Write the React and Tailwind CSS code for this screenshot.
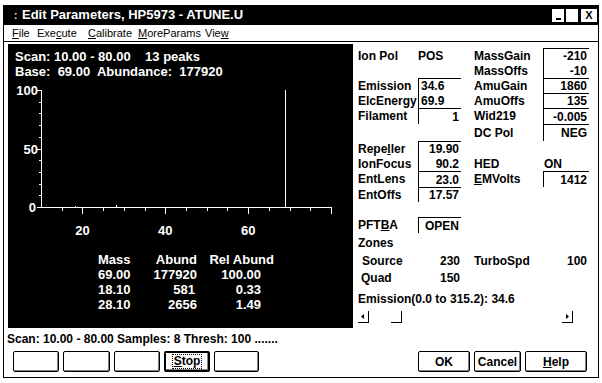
import React from 'react';

const U = ({ children }) => <span className="underline underline-offset-[1px]">{children}</span>;

// box edit field, sunken look = dark top + left edge
const Box = ({ children, top = true, left = false }) => (
  <div
    className={`w-full h-full flex items-center border-l border-black ${top ? 'border-t' : ''} ${
      left ? 'justify-start pl-[2px]' : 'justify-end pr-[2px]'
    }`}
  >
    {children}
  </div>
);

const rows = [
  { h: 'h-[15px]', l1: 'Ion Pol', v1: <span>POS</span>, l2: 'MassGain', v2: <Box>-210</Box> },
  { h: 'h-[15px]', l1: '', v1: null, l2: 'MassOffs', v2: <Box top={false}>-10</Box> },
  { h: 'h-[15px]', l1: 'Emission', v1: <Box left>34.6</Box>, l2: 'AmuGain', v2: <Box>1860</Box> },
  { h: 'h-[15px]', l1: 'ElcEnergy', v1: <Box left top={false}>69.9</Box>, l2: 'AmuOffs', v2: <Box>135</Box> },
  { h: 'h-[16px]', l1: 'Filament', v1: <Box>1</Box>, l2: 'Wid219', v2: <Box>-0.005</Box> },
  { h: 'h-[17px]', l1: '', v1: null, l2: 'DC Pol', v2: <Box>NEG</Box> },
  { h: 'h-[15px]', l1: <>Repe<U>l</U>ler</>, v1: <Box>19.90</Box>, l2: '', v2: null },
  { h: 'h-[15px]', l1: 'IonFocus', v1: <Box top={false}>90.2</Box>, l2: 'HED', v2: <span className="pl-[1px]">ON</span> },
  { h: 'h-[16px]', l1: 'EntLens', v1: <Box>23.0</Box>, l2: <><U>E</U>MVolts</>, v2: <Box>1412</Box> },
  { h: 'h-[15px]', l1: 'EntOffs', v1: <Box>17.57</Box>, l2: '', v2: null },
];

const grid = 'grid grid-cols-[60px_43px_13px_69px_46px] items-center';

function Chart() {
  const x0 = 33;
  const x1 = 323;
  const y0 = 128;
  const yTop = 11;
  const mx = (m) => x0 + ((m - 10) * (x1 - x0)) / 70;
  const py = (p) => y0 - ((y0 - yTop) * p) / 100;
  const xt = [15, 20, 25, 30, 35, 40, 45, 50, 55, 60, 65, 70, 75, 80];
  const yt = [10, 20, 30, 40, 60, 70, 80, 90];
  const txt = { fill: 'white', fontFamily: 'Liberation Sans, Arial, sans-serif', fontWeight: 700, fontSize: 13 };

  return (
    <svg width="345" height="160" className="block" shapeRendering="crispEdges">
      <line x1={x0 + 0.5} y1={yTop} x2={x0 + 0.5} y2={y0 + 1} stroke="white" />
      <line x1={x0} y1={y0 + 0.5} x2={x1 + 1} y2={y0 + 0.5} stroke="white" />
      {xt.map((m) => {
        const major = m % 20 === 0;
        const x = Math.round(mx(m)) + 0.5;
        return <line key={m} x1={x} y1={y0} x2={x} y2={y0 + (major ? 7 : 4)} stroke="white" />;
      })}
      {[0, 50, 100].map((p) => (
        <line key={p} x1={x0 - 4} y1={Math.round(py(p)) + 0.5} x2={x0} y2={Math.round(py(p)) + 0.5} stroke="white" />
      ))}
      {yt.map((p) => (
        <line key={p} x1={x0 - 2} y1={Math.round(py(p)) + 0.5} x2={x0} y2={Math.round(py(p)) + 0.5} stroke="white" />
      ))}
      {/* peaks */}
      <line x1={Math.round(mx(69)) + 0.5} y1={py(100)} x2={Math.round(mx(69)) + 0.5} y2={y0} stroke="white" />
      <line x1={Math.round(mx(28.1)) + 0.5} y1={y0 - 2} x2={Math.round(mx(28.1)) + 0.5} y2={y0} stroke="white" />
      <line x1={Math.round(mx(18.1)) + 0.5} y1={y0 - 1} x2={Math.round(mx(18.1)) + 0.5} y2={y0} stroke="white" />
      <text x="30" y="16" textAnchor="end" {...txt}>100</text>
      <text x="30" y="75" textAnchor="end" {...txt}>50</text>
      <text x="28" y="133" textAnchor="end" {...txt}>0</text>
      <text x={mx(20)} y="156" textAnchor="middle" {...txt}>20</text>
      <text x={mx(40)} y="156" textAnchor="middle" {...txt}>40</text>
      <text x={mx(60)} y="156" textAnchor="middle" {...txt}>60</text>
    </svg>
  );
}

const Btn = ({ w, children, disabled, isDefault }) => (
  <div
    className={`${w} h-[21px] flex items-center justify-center rounded-[2px] border-black text-[12px] font-bold ${
      isDefault ? 'border-2' : 'border'
    } ${disabled ? 'text-[#c8c8c8]' : 'text-black'} shadow-[inset_-1px_-1px_0_#808080]`}
  >
    {children}
  </div>
);

const ScrollBtn = ({ dir }) => (
  <div className="w-[11px] h-[12px] border-r border-b border-black flex items-center justify-center">
    {dir && (
      <svg width="4" height="5" viewBox="0 0 4 5">
        {dir === 'l' ? <path d="M3 0L0 2.5L3 5Z" fill="black" /> : <path d="M1 0L4 2.5L1 5Z" fill="black" />}
      </svg>
    )}
  </div>
);

export default function App() {
  return (
    <div className="w-[602px] h-[383px] bg-white overflow-hidden font-['Liberation_Sans',Arial,sans-serif] text-black">
      <div className="ml-[3px] mt-[5px] w-[596px] h-[373px] border-l border-r border-b border-black flex flex-col">
        {/* title bar */}
        <div className="h-[20px] bg-black flex items-center text-white pl-[10px] pr-[1px]">
          <span className="text-[10px] font-bold w-[8px]">:</span>
          <span className="text-[13px] font-bold">Edit Parameters, HP5973 - ATUNE.U</span>
          <div className="ml-auto flex items-center gap-[2px]">
            <div className="w-[12px] h-[13px] bg-white flex items-end justify-center pb-[2px]">
              <div className="w-[5px] h-[2px] bg-black" />
            </div>
            <div className="w-[12px] h-[13px] bg-white" />
            <div className="ml-[1px] w-[16px] h-[13px] bg-white flex items-center justify-center text-[11px] font-bold text-black leading-none">
              X
            </div>
          </div>
        </div>

        {/* menu */}
        <div className="h-[17px] border-b border-black flex items-center pl-[8px] text-[11px]">
          <span className="inline-block shrink-0 w-[25px]"><U>F</U>ile</span>
          <span className="inline-block shrink-0 w-[51px]">Exe<U>c</U>ute</span>
          <span className="inline-block shrink-0 w-[50px]"><U>C</U>alibrate</span>
          <span className="inline-block shrink-0 w-[67px]"><U>M</U>oreParams</span>
          <span className="inline-block shrink-0">Vie<U>w</U></span>
        </div>

        {/* body */}
        <div className="flex pt-[2px] pl-[4px]">
          <div className="w-[345px] h-[284px] bg-black text-white font-bold text-[13px] leading-[15px] pt-[5px]">
            <div className="pl-[7px] whitespace-pre">Scan: 10.00 - 80.00    13 peaks</div>
            <div className="pl-[7px] whitespace-pre">Base:  69.00  Abundance:  177920</div>
            <Chart />
            <div className="mt-[13px] pl-[90px] grid grid-cols-[32px_67px_77px] text-right">
              <span>Mass</span>
              <span>Abund</span>
              <span>Rel Abund</span>
              <span>69.00</span>
              <span>177920</span>
              <span className="pr-[13px]">100.00</span>
              <span>18.10</span>
              <span className="pr-[2px]">581</span>
              <span className="pr-[13px]">0.33</span>
              <span>28.10</span>
              <span>2656</span>
              <span className="pr-[13px]">1.49</span>
            </div>
          </div>

          {/* parameters */}
          <div className="pl-[5px] pt-[4px] text-[12px] font-bold leading-[14px]">
            {rows.map((r, i) => (
              <div key={i} className={`${grid} ${r.h}`}>
                <span>{r.l1}</span>
                <div className="h-full flex items-center">{r.v1}</div>
                <span />
                <span>{r.l2}</span>
                <div className="h-full flex items-center">{r.v2}</div>
              </div>
            ))}

            <div className={`${grid} h-[16px] mt-[15px]`}>
              <span>PFT<U>B</U>A</span>
              <div className="h-full flex"><Box>OPEN</Box></div>
            </div>
            <div className="h-[16px] mt-[2px] flex items-center">Zones</div>
            <div className={`${grid} h-[16px] mt-[2px]`}>
              <span className="pl-[4px]">Source</span>
              <span className="text-right pr-[1px]">230</span>
              <span />
              <span>TurboSpd</span>
              <span className="text-right pr-[2px]">100</span>
            </div>
            <div className={`${grid} h-[16px] mt-[1px]`}>
              <span className="pl-[3px]">Quad</span>
              <span className="text-right pr-[1px]">150</span>
            </div>
            <div className="h-[16px] mt-[5px] flex items-center">Emission(0.0 to 315.2): 34.6</div>
            <div className="mt-[4px] w-[215px] flex">
              <ScrollBtn dir="l" />
              <div className="flex-1 pl-[22px]">
                <ScrollBtn />
              </div>
              <ScrollBtn dir="r" />
            </div>
          </div>
        </div>

        {/* status */}
        <div className="mt-[4px] pl-[3px] text-[12px] font-bold leading-[14px]">
          Scan: 10.00 - 80.00 Samples: 8 Thresh: 100 .......
        </div>

        {/* buttons */}
        <div className="mt-[5px] flex pl-[9px] pr-[11px]">
          <div className="flex gap-[4px]">
            <Btn w="w-[46px]" disabled />
            <Btn w="w-[47px]" disabled />
            <Btn w="w-[46px]" disabled />
            <Btn w="w-[46px]" isDefault>
              <span className="outline outline-1 outline-dotted outline-black px-[1px] leading-[13px]"><U>S</U>top</span>
            </Btn>
            <Btn w="w-[45px]" disabled />
          </div>
          <div className="ml-auto flex gap-[4px]">
            <Btn w="w-[52px]">OK</Btn>
            <Btn w="w-[47px]">Cancel</Btn>
            <Btn w="w-[62px]"><U>H</U>elp</Btn>
          </div>
        </div>
      </div>
    </div>
  );
}
